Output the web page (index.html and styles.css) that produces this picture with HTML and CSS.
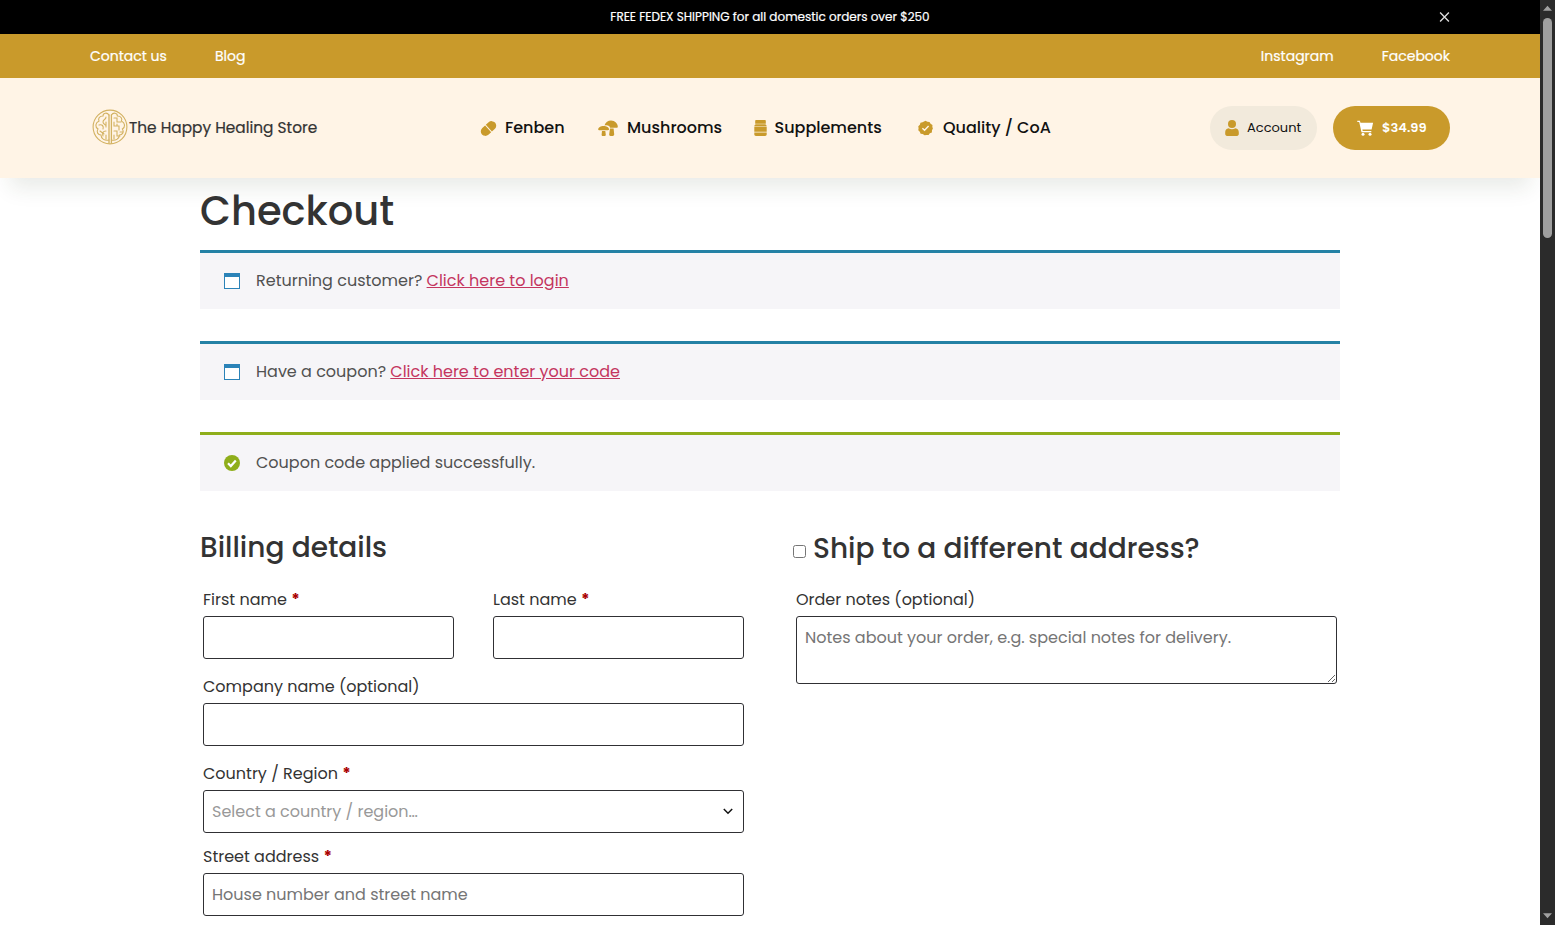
FILE: index.html
```
<!DOCTYPE html>
<html lang="en">
<head>
<meta charset="utf-8">
<title>Checkout - The Happy Healing Store</title>
<link rel="stylesheet" href="styles.css">
</head>
<body>
<div class="window">
  <div class="page">
    <div class="promo">
      <span class="promo-text">FREE FEDEX SHIPPING for all domestic orders over $250</span>
      <svg class="promo-close" viewBox="0 0 12 12"><path d="M1.2 1.2l9.6 9.6M10.8 1.2l-9.6 9.6" stroke="#ddd" stroke-width="1.5" fill="none"/></svg>
    </div>
    <div class="topbar">
      <div class="links"><a>Contact us</a><a>Blog</a></div>
      <div class="links"><a>Instagram</a><a>Facebook</a></div>
    </div>
    <header class="header">
      <a class="logo">
        <svg class="logo-mark" viewBox="0 0 36 36" fill="none" stroke="#d3b262" stroke-width="1.1" stroke-linecap="round">
          <circle cx="18" cy="18" r="16.9"/>
          <path d="M17 6v28M19.400 6v28" stroke-width="1.3"/>
          <path d="M17 6c-2-3-6-2-6 1-4 0-5 3-4 5-4 2-4 6-1 8-2 3 0 6 3 6 0 4 4 6 8 5"/>
          <path d="M19.400 6c2-3 6-2 6 1 4 0 5 3 4 5 4 2 4 6 1 8 2 3 0 6-3 6 0 4-4 6-8 5"/>
          <path d="M14 8c0 3-3 2-3 5s4 2 3 5M7 16c3-1 5 1 4 4M14 22c-3 0-4 2-3 5M14 13v4M8 22l4 3M14 26v4"/>
          <path d="M22 9h3v4h4M22 13v4h5v4M22 22h3v5h3M22 26v4M25 17v-2M28 23h3"/>
        </svg>
        <span class="logo-text">The Happy Healing Store</span>
      </a>
      <nav class="nav">
        <a class="nav-item n1"><svg viewBox="0 0 18 18"><g transform="rotate(-42 9 9)" fill="#c99a2b"><path d="M4.500 4.200h4v9.600h-4a4.800 4.800 0 0 1 0-9.600z"/><path d="M9.500 4.200h4a4.800 4.800 0 0 1 0 9.600h-4z"/></g></svg><span>Fenben</span></a>
        <a class="nav-item n2"><svg viewBox="0 0 20 18" fill="#c99a2b"><path d="M6.500 6.500C7.500 3 10 1.500 13 1.500c4 0 6.800 3.200 6.800 6.200 0 .8-.5 1-1.200 1H12c0-2-2.500-3-5.500-2.200z"/><path d="M.2 10.500c0-2.200 2.600-3.500 5.400-3.500s5.400 1.300 5.400 3.300c0 .7-.4.900-1 .9H1.100c-.6 0-.9-.2-.9-.7z"/><path d="M4 12h3.300l.5 3.700c0 .8-.6 1.300-1.300 1.300H4.900c-.8 0-1.300-.5-1.300-1.300zM12 9.500h3.600l.6 5.700c0 1-.7 1.700-1.500 1.700h-2.200c-.9 0-1.400-.7-1.300-1.700z"/></svg><span>Mushrooms</span></a>
        <a class="nav-item n3"><svg viewBox="0 0 13 16" fill="#c99a2b"><path d="M2 0h9a.8.8 0 0 1 .8.800v2.900H1.200V.8A.8.800 0 0 1 2 0zM2 4.200h9c1 .4 1.700 1 1.700 2.300H.3C.3 5.200 1 4.600 2 4.200zM.3 7.100h12.400v4.700H.3zM.3 12.400h12.400v1.800c0 1-.7 1.700-1.600 1.700H1.900c-.9 0-1.600-.7-1.600-1.700z"/></svg><span>Supplements</span></a>
        <a class="nav-item n4"><svg viewBox="0 0 16 16"><path d="M8 .3l2 1.100 2.300.1 1.100 2 2 1.200-.1 2.300.6 1.500-1 2-.1 2.200-2.200 1-1.300 1.800-2.300-.1L7 15.700l-2-1.200-2.200-.3-.9-2.100L.3 10.500l.3-2.300L.3 6l1.700-1.500.6-2.200 2.200-.5z" fill="#c99a2b"/><path d="M4.700 8.200l2.300 2.300 4.300-4.600" stroke="#fff4e6" stroke-width="1.500" fill="none"/></svg><span>Quality / CoA</span></a>
      </nav>
      <div class="actions">
        <a class="account"><svg viewBox="0 0 14 16" fill="#c99a2b"><circle cx="7" cy="4" r="4"/><path d="M3.600 8.200c2 1.400 4.800 1.400 6.800 0 2.200.3 3.400 2 3.400 4v1.900c0 1-.8 1.800-1.800 1.800H2c-1 0-1.800-.8-1.800-1.800v-1.900c0-2 1.200-3.700 3.400-4z"/></svg><span>Account</span></a>
        <a class="cart"><svg viewBox="0 0 17 16"><path d="M.3.800h2.600l.6 1.900h12.600l-1.500 6.800H5.400l.3 1.400h8.600v1.300H4.500L2.200 2.100H.3z" fill="#fff"/><circle cx="6" cy="14.200" r="1.500" fill="#fff"/><circle cx="13" cy="14.200" r="1.500" fill="#fff"/></svg><span>$34.99</span></a>
      </div>
    </header>
    <main class="content">
      <h1>Checkout</h1>
      <div class="notice"><i class="win-icon"></i><p>Returning customer? <a>Click here to login</a></p></div>
      <div class="notice"><i class="win-icon"></i><p>Have a coupon? <a>Click here to enter your code</a></p></div>
      <div class="notice success"><svg class="ok" viewBox="0 0 16 16"><circle cx="8" cy="8" r="8" fill="#8fae1b"/><path d="M4 8.300l2.800 2.800 5-5.700" fill="none" stroke="#fff" stroke-width="2.200"/></svg><p>Coupon code applied successfully.</p></div>
      <form class="columns">
        <section class="billing">
          <h3 class="h-bill">Billing details</h3>
          <div class="pair">
            <label class="field"><span class="label">First name <b>*</b></span><input type="text"></label>
            <label class="field"><span class="label">Last name <b>*</b></span><input type="text"></label>
          </div>
          <label class="field"><span class="label">Company name (optional)</span><input type="text"></label>
          <label class="field country"><span class="label">Country / Region <b>*</b></span>
            <span class="select"><span>Select a country / region…</span><svg viewBox="0 0 10 7"><path d="M.8 1l4.200 4.200L9.200 1" fill="none" stroke="#111" stroke-width="1.500"/></svg></span></label>
          <label class="field"><span class="label">Street address <b>*</b></span><input type="text" placeholder="House number and street name"></label>
        </section>
        <section class="shipping">
          <h3 class="h-ship"><input type="checkbox"><span>Ship to a different address?</span></h3>
          <label class="field"><span class="label">Order notes (optional)</span><textarea placeholder="Notes about your order, e.g. special notes for delivery."></textarea></label>
        </section>
      </form>
    </main>
  </div>
  <div class="scrollbar">
    <svg viewBox="0 0 10 6"><path d="M0 6l5-5.500L10 6z" fill="#a0a0a0"/></svg>
    <div class="thumb"></div>
    <svg class="down" viewBox="0 0 10 6"><path d="M0 0l5 5.500L10 0z" fill="#a0a0a0"/></svg>
  </div>
</div>
</body>
</html>
```
FILE: styles.css
```
* { box-sizing: border-box; }
body { margin: 0; background: #fff; color: #333; font: 16px/24px Poppins, Inter, "Open Sans", sans-serif; overflow: hidden; }
h1, h3, p { margin: 0; }
svg { display: block; flex: none; }
span, a { white-space: nowrap; }

.window { display: grid; grid-template-columns: 1540px 15px; height: 925px; overflow: hidden; }
.page { height: 925px; overflow: hidden; }

.promo { position: relative; height: 34px; background: #000; color: #fff; display: flex; align-items: center; justify-content: center; font-size: 12px; -webkit-text-stroke: .2px #fff; }
.promo-close { position: absolute; right: 90px; top: 11px; width: 11px; height: 12px; }

.topbar { height: 44px; padding: 0 90px; background: #c99a2b; color: #fff; display: flex; justify-content: space-between; align-items: center; font-size: 14px; -webkit-text-stroke: .2px #fff; }
.links { display: flex; gap: 48px; }

.header { position: relative; height: 100px; padding: 0 90px; background: #fff4e6; display: flex; align-items: center; box-shadow: 0 20px 20px -10px rgba(40, 60, 30, .1); }
.logo { display: flex; align-items: center; width: 391px; padding-left: 2px; }
.logo-mark { width: 36px; height: 36px; margin: -2px 1px 0 0; }
.logo-text { font-size: 15.35px; -webkit-text-stroke: .2px #333; }
.nav { display: flex; width: 729px; color: #111; font-weight: 500; }
.nav-item { display: flex; align-items: center; }
.nav-item span { margin-top: -1px; }
.n1 { width: 117px; }
.n2 { width: 156px; }
.n3 { width: 164px; }
.n1 svg { width: 17px; height: 17px; margin: 0 8px 0 -1px; }
.n2 svg { width: 20px; height: 18px; margin-right: 9px; }
.n3 svg { width: 13px; height: 16px; margin-right: 7.5px; }
.n4 svg { width: 15px; height: 16px; margin: -1px 10px 0 0; }
.actions { display: flex; gap: 16px; }
.account, .cart { height: 44px; border-radius: 22px; display: flex; align-items: center; font-size: 13px; }
.account { width: 107px; padding-left: 15px; background: #f2eadc; color: #111; }
.account svg { width: 14px; height: 16px; margin-right: 8px; }
.account span { margin-top: -1px; }
.cart { width: 117px; padding-left: 24px; background: #c99a2b; color: #fff; font-weight: 600; }
.cart svg { width: 17px; height: 16px; margin-right: 8px; }

.content { width: 1140px; margin: 0 auto; }
h1 { height: 72px; padding-top: 9px; font-size: 40px; line-height: 48px; font-weight: 500; position: relative; }
.notice { height: 59px; margin-bottom: 32px; padding-left: 24px; border-top: 3px solid #2481a5; background: #f6f5f8; color: #515151; display: flex; align-items: center; }
.notice.success { border-top-color: #8fae1b; }
.win-icon { width: 16px; height: 16px; margin-right: 16px; border: 1px solid #2b83b8; border-top-width: 4px; background: #fff; }
.ok { width: 16px; height: 16px; margin-right: 16px; }
.notice a { color: #c4355f; text-decoration: underline; }

.columns { display: flex; gap: 46px; padding-top: 8px; }
.billing, .shipping { width: 547px; padding: 0 3px; }
h3 { height: 57px; font-size: 28px; line-height: 34px; font-weight: 500; }
.h-bill { margin-left: -3px; }
.h-ship { display: flex; align-items: center; height: 36px; margin: 0 0 21px -3px; }
.h-ship input { width: 13px; height: 13px; margin: 5px 7px 0 0; }
.pair { display: flex; gap: 39px; }
.pair .field { width: 251px; }
.field { display: block; height: 87px; }
.country { height: 83px; }
.label { display: block; height: 28px; line-height: 24px; }
.label b { color: #a00; }
.field input, .select, textarea { display: block; width: 100%; height: 43px; border: 1px solid #303034; border-radius: 3px; background: #fff; padding: 8px; font: inherit; line-height: 24px; }
.field input { padding-bottom: 9px; }
.select { display: flex; justify-content: space-between; align-items: center; color: #999; }
.select svg { width: 10px; height: 7px; margin-right: 2px; }
.field textarea { height: 68px; padding-top: 9px; }
::placeholder { color: #757575; opacity: 1; }

.scrollbar { background: #2b2b2b; display: flex; flex-direction: column; align-items: center; padding: 5px 0 6px; }
.scrollbar svg { width: 9px; height: 6px; }
.thumb { width: 9px; height: 220px; margin-top: 7px; border-radius: 5px; background: #9f9f9f; }
.down { margin-top: auto; }
```
